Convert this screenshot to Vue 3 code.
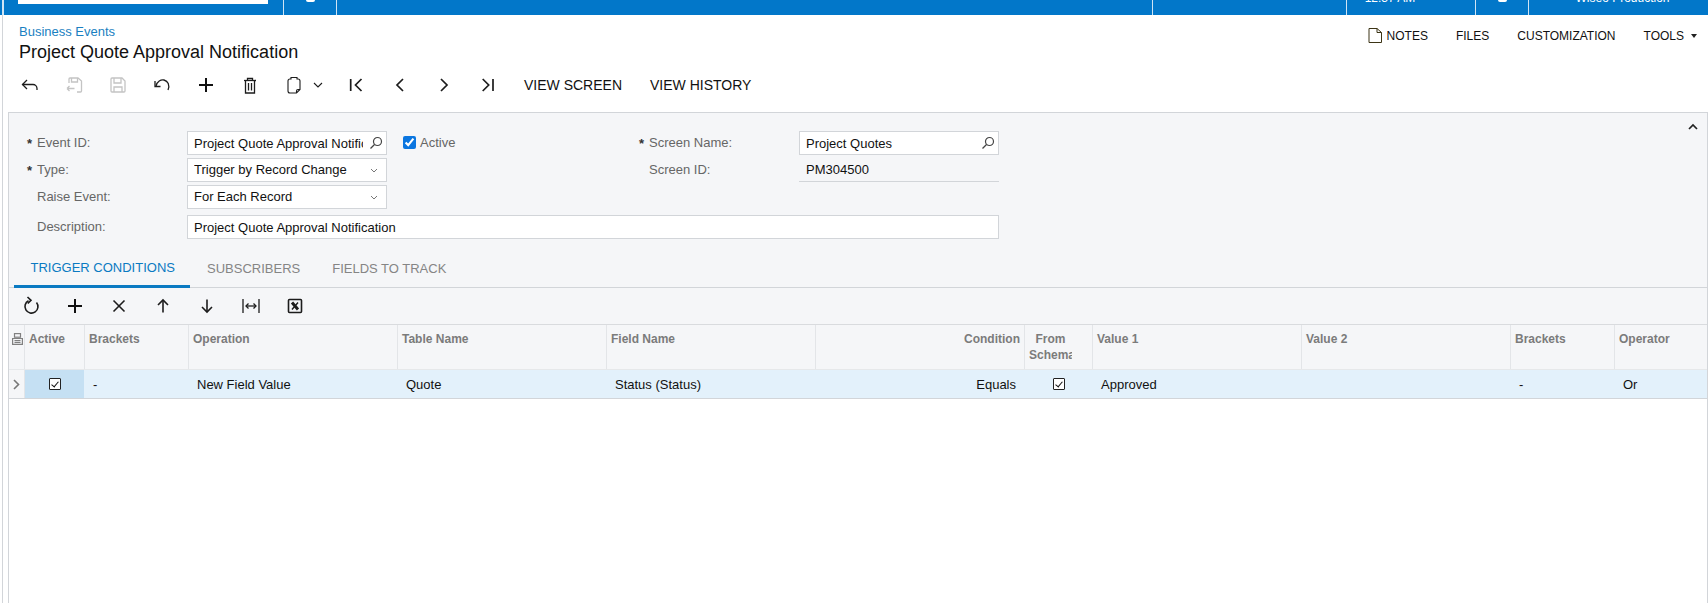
<script setup>
const I = {
  back: ['M9 7 L4.5 11.5 L9 16', 'M4.5 11.5 H15 a4 4 0 0 1 4 4 v1.5'],
  saveBack: ['M7 10 V6 a1 1 0 0 1 1-1 H16 L19.5 8 V18 a1 1 0 0 1-1 1 H15', 'M9.5 5 V9 H15.5 V5', 'M5 15.5 L7.5 13 M5 15.5 L7.5 18 M5 15.5 H12.5'],
  save: ['M5 6 a1 1 0 0 1 1-1 H16 L19 8 V18 a1 1 0 0 1-1 1 H6 a1 1 0 0 1-1-1 Z', 'M8 5 V10 H15 V5', 'M8 19 V14 H16 V19'],
  undo: ['M6 13 C7 8 11 6.5 14 7 C18 8 20 12 18 17', 'M5 8 V13.5 H10.5'],
  plus: ['M5 12 H19', 'M12 5 V19'],
  trash: ['M6 7.5 H18', 'M9.5 7 V5.5 H14.5 V7', 'M7.5 8 V20 H16.5 V8', 'M10.5 10 V17.5', 'M13.5 10 V17.5'],
  clip: ['M9 6 V4.5 H15 V6 H16 a2 2 0 0 1 2 2 V16.5 L14.5 20 H8 a2 2 0 0 1-2-2 V8 a2 2 0 0 1 2-2 Z', 'M14.5 20 V18 a1.5 1.5 0 0 1 1.5-1.5 H18'],
  first: ['M6.7 6 V18', 'M17.5 6 L11.5 12 L17.5 18'],
  prev: ['M15 6 L9 12 L15 18'],
  next: ['M9 6 L15 12 L9 18'],
  last: ['M6.7 6 L12.7 12 L6.7 18', 'M17 6 V18'],
  refresh: ['M17.5 8.5 A6.5 6.5 0 1 1 9.5 6.8', 'M8.5 3 L12 6.3 L8.8 9.5'],
  close: ['M6.5 6.5 L17.5 17.5', 'M17.5 6.5 L6.5 17.5'],
  up: ['M12 18.5 V6', 'M7 11 L12 6 L17 11'],
  down: ['M12 5.5 V18', 'M7 13 L12 18 L17 13'],
  fit: ['M4 5 V19', 'M20 5 V19', 'M7 12 H17', 'M9.5 9.5 L7 12 L9.5 14.5', 'M14.5 9.5 L17 12 L14.5 14.5']
}
const mainTools = [
  { p: I.back }, { p: I.saveBack, off: true }, { p: I.save, off: true }, { p: I.undo }, { p: I.plus, heavy: true }, { p: I.trash }
]
const navTools = [{ p: I.first }, { p: I.prev }, { p: I.next }, { p: I.last }]
const gridTools = [{ p: I.refresh, mid: true }, { p: I.plus, heavy: true }, { p: I.close, mid: true }, { p: I.up, mid: true }, { p: I.down, mid: true }, { p: I.fit }]
const cols = [
  { key: 'brackets', title: 'Brackets', value: '-', cls: 'w104' },
  { key: 'op', title: 'Operation', value: 'New Field Value', cls: 'w209' },
  { key: 'table', title: 'Table Name', value: 'Quote', cls: 'w209' },
  { key: 'field', title: 'Field Name', value: 'Status (Status)', cls: 'w209' },
  { key: 'cond', title: 'Condition', value: 'Equals', cls: 'w209 right' },
  { key: 'schema', title: 'From Schema', check: true, cls: 'w68 center' },
  { key: 'v1', title: 'Value 1', value: 'Approved', cls: 'w209' },
  { key: 'v2', title: 'Value 2', value: '', cls: 'w209' },
  { key: 'b2', title: 'Brackets', value: '-', cls: 'w104' },
  { key: 'oper', title: 'Operator', value: 'Or', cls: 'w92 last' }
]
</script>

<template>
  <div class="page">
    <header class="bar">
      <div class="cell c-edge"></div>
      <div class="cell c-search"><div class="searchbox"></div></div>
      <div class="cell c-icon"><span class="stub"></span></div>
      <div class="cell c-grow"></div>
      <div class="cell c-blank"></div>
      <div class="cell c-time"><span class="clip">12:37 AM</span></div>
      <div class="cell c-icon2"><span class="stub"></span></div>
      <div class="cell c-co"><span class="clip">Wiseo Production</span></div>
    </header>

    <div class="body">
      <div class="head">
        <div class="titles">
          <a class="crumb">Business Events</a>
          <h1 class="title">Project Quote Approval Notification</h1>
        </div>
        <nav class="cmds">
          <span class="cmd notes">
            <svg class="noteicon" width="14" height="15" viewBox="0 0 14 15" fill="none" stroke="#3d3516" stroke-width="1">
              <path d="M1 .5 H9 L13.5 4.5 V14.5 H1 Z" /><path d="M9 .5 V4.5 H13.5" />
            </svg>NOTES</span>
          <span class="cmd">FILES</span>
          <span class="cmd">CUSTOMIZATION</span>
          <span class="cmd tools">TOOLS<i class="caret"></i></span>
        </nav>
      </div>

      <div class="toolbar">
        <button v-for="(t, i) in mainTools" :key="i" class="tbtn" :class="{ off: t.off, heavy: t.heavy }">
          <svg width="24" height="24" viewBox="0 0 24 24"><path v-for="d in t.p" :key="d" :d="d" /></svg>
        </button>
        <button class="tbtn clipbtn">
          <svg width="24" height="24" viewBox="0 0 24 24"><path v-for="d in I.clip" :key="d" :d="d" /></svg>
          <svg class="minichev" width="10" height="6" viewBox="0 0 10 6"><path d="M1 1 L5 5 L9 1" /></svg>
        </button>
        <button v-for="(t, i) in navTools" :key="'n' + i" class="tbtn nav">
          <svg width="24" height="24" viewBox="0 0 24 24"><path v-for="d in t.p" :key="d" :d="d" /></svg>
        </button>
        <button class="tbtn text">VIEW SCREEN</button>
        <button class="tbtn text">VIEW HISTORY</button>
      </div>

      <section class="panel">
        <svg class="collapse" width="10" height="7" viewBox="0 0 10 7"><path d="M1 6 L5 2 L9 6" /></svg>
        <div class="form">
          <label class="lbl"><b>*</b>Event ID:</label>
          <div class="field"><input readonly value="Project Quote Approval Notification" />
            <svg class="mag" width="14" height="14" viewBox="0 0 14 14"><circle cx="8.5" cy="5.5" r="4" /><path d="M5.5 8.5 L1.5 12.5" /></svg>
          </div>
          <div class="activeBox"><input type="checkbox" checked /><span>Active</span></div>
          <label class="lbl second"><b>*</b>Screen Name:</label>
          <div class="field"><input readonly value="Project Quotes" />
            <svg class="mag" width="14" height="14" viewBox="0 0 14 14"><circle cx="8.5" cy="5.5" r="4" /><path d="M5.5 8.5 L1.5 12.5" /></svg>
          </div>

          <label class="lbl"><b>*</b>Type:</label>
          <div class="field pick"><input readonly value="Trigger by Record Change" />
            <svg class="chev" width="8" height="5" viewBox="0 0 8 5"><path d="M1 1 L4 4 L7 1" /></svg>
          </div>
          <div></div>
          <label class="lbl second"><b></b>Screen ID:</label>
          <div class="static">PM304500</div>

          <label class="lbl"><b></b>Raise Event:</label>
          <div class="field pick"><input readonly value="For Each Record" />
            <svg class="chev" width="8" height="5" viewBox="0 0 8 5"><path d="M1 1 L4 4 L7 1" /></svg>
          </div>
          <div class="span3"></div>

          <label class="lbl desc"><b></b>Description:</label>
          <div class="field span4 desc"><input readonly value="Project Quote Approval Notification" /></div>
        </div>

        <div class="tabs">
          <span class="tab on">TRIGGER CONDITIONS</span>
          <span class="tab">SUBSCRIBERS</span>
          <span class="tab">FIELDS TO TRACK</span>
        </div>

        <div class="gridbar">
          <button v-for="(t, i) in gridTools" :key="i" class="tbtn" :class="{ heavy: t.heavy, mid: t.mid }">
            <svg width="24" height="24" viewBox="0 0 24 24"><path v-for="d in t.p" :key="d" :d="d" /></svg>
          </button>
          <button class="tbtn">
            <svg class="xl" width="24" height="24" viewBox="0 0 24 24">
              <rect x="5.5" y="5.5" width="13" height="13" rx="1" />
              <path class="x1" d="M9 8.5 L15 15.5" /><path class="x2" d="M15 8.5 L9 15.5" />
            </svg>
          </button>
        </div>

        <div class="ghead">
          <div class="gc sel">
            <svg width="11" height="12" viewBox="0 0 11 12" fill="none" stroke="#808080" stroke-width="1.2">
              <rect x="2.5" y=".6" width="6" height="3.6" /><path d="M.6 5.5 H10.4 V11.4 H.6 Z M2.5 7.6 H8.5 M2.5 9.5 H8.5" />
            </svg>
          </div>
          <div class="gc w60">Active</div>
          <div v-for="c in cols" :key="c.key" class="gc" :class="c.cls"><span class="hd">{{ c.title }}</span></div>
        </div>
        <div class="grow">
          <div class="gc sel"><svg width="7" height="11" viewBox="0 0 7 11"><path d="M1 1 L5.5 5.5 L1 10" /></svg></div>
          <div class="gc w60 activecell"><span class="cb"></span></div>
          <div v-for="c in cols" :key="c.key" class="gc" :class="c.cls">
            <span v-if="c.check" class="cb"></span>
            <template v-else>{{ c.value }}</template>
          </div>
        </div>
      </section>
    </div>
  </div>
</template>

<style>
html, body { margin: 0; height: 100%; overflow: hidden; background: #fff; }
</style>

<style scoped>
.page { width: 1708px; height: 603px; overflow: hidden; font-family: "Liberation Sans", Arial, sans-serif; font-size: 13px; color: #111; }
.bar { display: flex; height: 15px; background: #0277c9; overflow: hidden; color: #fff; }
.cell { box-sizing: border-box; flex: none; height: 15px; border-left: 1px solid #cfe4f4; display: flex; justify-content: center; align-items: flex-end; }
.c-edge { width: 1px; margin-left: 2px; }
.c-search { width: 280px; align-items: flex-start; justify-content: flex-start; padding-left: 14px; }
.searchbox { width: 250px; height: 4px; background: #fff; }
.c-icon { width: 53px; align-items: flex-start; }
.c-grow { width: 816px; }
.c-blank { width: 194px; }
.c-time { width: 129px; padding-right: 42px; }
.c-icon2 { width: 53px; align-items: flex-start; }
.c-co { width: 180px; padding-left: 8px; }
.stub { display: block; width: 9px; height: 2px; background: #fff; border-radius: 0 0 2px 2px; }
.clip { font-size: 12px; line-height: 16px; height: 16px; flex: none; margin-bottom: 9px; white-space: nowrap; }

.body { box-sizing: border-box; height: 588px; margin-left: 2px; border-left: 1px solid #d2d5d9; }
.head { display: flex; justify-content: space-between; height: 51px; }
.titles { padding: 9px 0 0 16px; }
.crumb { display: block; color: #1a7fc1; font-size: 13px; line-height: 16px; }
.title { margin: 1px 0 0; font-weight: 400; font-size: 18px; line-height: 22px; color: #111; }
.cmds { display: flex; align-items: center; height: 41px; }
.cmd { font-size: 12px; margin-right: 28px; display: inline-flex; align-items: center; }
.noteicon { margin-right: 5px; }
.tools { margin-right: 11px; }
.caret { display: inline-block; margin-left: 7px; border: 3.5px solid transparent; border-top: 4px solid #222; border-bottom: 0; }

.toolbar { display: flex; align-items: center; height: 38px; padding-left: 5px; }
.gridbar { display: flex; align-items: center; height: 36px; background: #f5f6f8; }
.tbtn { flex: none; width: 44px; height: 32px; padding: 0; border: 0; background: none; display: inline-flex; align-items: center; justify-content: center; font: inherit; color: #111; }
.tbtn svg { fill: none; stroke: #1c1c1c; stroke-width: 1.3; }
.tbtn.off svg { stroke: #c4c4c4; }
.tbtn.heavy svg { stroke-width: 2; stroke: #111; }
.tbtn.mid svg { stroke-width: 1.6; }
.tbtn.nav svg { stroke-width: 1.7; }
.clipbtn { width: 62px; justify-content: flex-start; padding-left: 10px; }
.clipbtn svg { stroke-width: 1.1; }
.minichev { margin-left: 7px; }
.tbtn.text { width: auto; padding: 0 14px; font-size: 14px; white-space: nowrap; }

.panel { position: relative; box-sizing: border-box; margin: 8px 0 0 5px; width: 1700px; height: 491px; border: 1px solid #d2d5d9; border-bottom: 0; background: #fff; }
.collapse { position: absolute; right: 9px; top: 10px; fill: none; stroke: #222; stroke-width: 1.7; }
.form { display: grid; grid-template-columns: 178px 200px 252px 160px 200px; grid-auto-rows: 24px; row-gap: 3px; padding-top: 18px; background: #f5f6f8; }
.lbl { display: flex; align-items: center; color: #666; font-size: 13px; padding-left: 18px; height: 22px; }
.lbl b { display: inline-block; width: 10px; flex: none; font-weight: 700; font-size: 13px; color: #333; padding-top: 4px; height: 14px; line-height: 14px; }
.lbl.second { padding-left: 0; }
.lbl.desc { margin-top: 3px; }
.field.desc { margin-top: 3px; }
.span3 { grid-column: span 3; }
.span4 { grid-column: span 4; }
.field { box-sizing: border-box; display: flex; align-items: center; height: 24px; background: #fff; border: 1px solid #d2d5d9; }
.field input { flex: 1; min-width: 0; border: 0; outline: 0; padding: 0 0 0 6px; margin: 0; background: none; font: inherit; color: #111; height: 22px; }
.field.pick input { height: 20px; margin-bottom: 2px; }
.mag { flex: none; margin: 0 3px 0 6px; fill: none; stroke: #444; stroke-width: 1.2; }
.chev { flex: none; margin: 0 8px 0 16px; fill: none; stroke: #777; stroke-width: 1; }
.activeBox { display: flex; align-items: center; height: 22px; padding-left: 16px; color: #666; }
.activeBox input { margin: 0 4px 0 0; width: 13px; height: 13px; accent-color: #0b76e0; }
.static { box-sizing: border-box; height: 24px; padding: 3px 0 0 7px; border-bottom: 1px solid #d2d5d9; line-height: 18px; }

.tabs { display: flex; box-sizing: border-box; height: 52px; padding-left: 5px; align-items: flex-end; background: #f5f6f8; border-bottom: 1px solid #d2d5d9; }
.tab { box-sizing: border-box; height: 27px; padding: 0 16px; line-height: 15px; font-size: 13px; color: #858585; margin-bottom: -1px; white-space: nowrap; }
.tab.on { width: 176px; margin-right: 1px; padding: 0 0 0 16.5px; color: #0a7ac2; border-bottom: 3px solid #0a7ac2; line-height: 13px; }
.xl { stroke-width: 1.6 !important; }
.xl .x1 { stroke-width: 3; }
.xl .x2 { stroke-width: 1.4; }

.ghead, .grow { display: flex; }
.ghead { height: 45px; background: #f5f6f8; border-top: 1px solid #d9dbde; box-sizing: border-box; font-size: 12px; font-weight: 700; color: #7b7b7b; }
.grow { height: 30px; box-sizing: border-box; background: #e3f1fb; border-bottom: 1px solid #d2d5d9; border-top: 1px solid #e6e8ea; }
.gc { box-sizing: border-box; flex: none; border-right: 1px solid #e3e5e8; overflow: hidden; white-space: nowrap; }
.ghead .gc { padding: 6px 4px 0; line-height: 16px; }
.grow .gc { padding: 0 8px; line-height: 27px; display: flex; align-items: center; border-right-color: #e3f1fb; }
.sel { width: 16px; background: #f5f6f8; }
.ghead .sel { padding: 8px 0 0 3px; }
.grow .sel { padding: 0 0 0 4px; border-right: 1px solid #e3e5e8; }
.sel svg { display: block; }
.grow .sel svg { fill: none; stroke: #777; stroke-width: 1.6; }
.w60 { width: 60px; }
.ghead .w60 { padding-left: 4px; }
.w104 { width: 104px; }
.w209 { width: 209px; }
.w68 { width: 68px; }
.w92 { width: 92px; }
.last { width: 91px; border-right: 0; }
.ghead .right { text-align: right; }
.grow .right { justify-content: flex-end; }
.ghead .center { white-space: normal; text-align: center; }
.ghead .center .hd { display: block; width: 43px; overflow: hidden; }
.grow .center, .grow .activecell { justify-content: center; }
.grow .activecell { background: #c5e0f3; }
.cb { box-sizing: border-box; position: relative; display: block; width: 12px; height: 12px; border: 1.3px solid #222; border-radius: 1px; background: #fff; }
.cb::after { content: ""; position: absolute; left: 3px; top: 1px; width: 3px; height: 6px; border: solid #111; border-width: 0 1.5px 1.5px 0; transform: rotate(40deg); }
</style>
